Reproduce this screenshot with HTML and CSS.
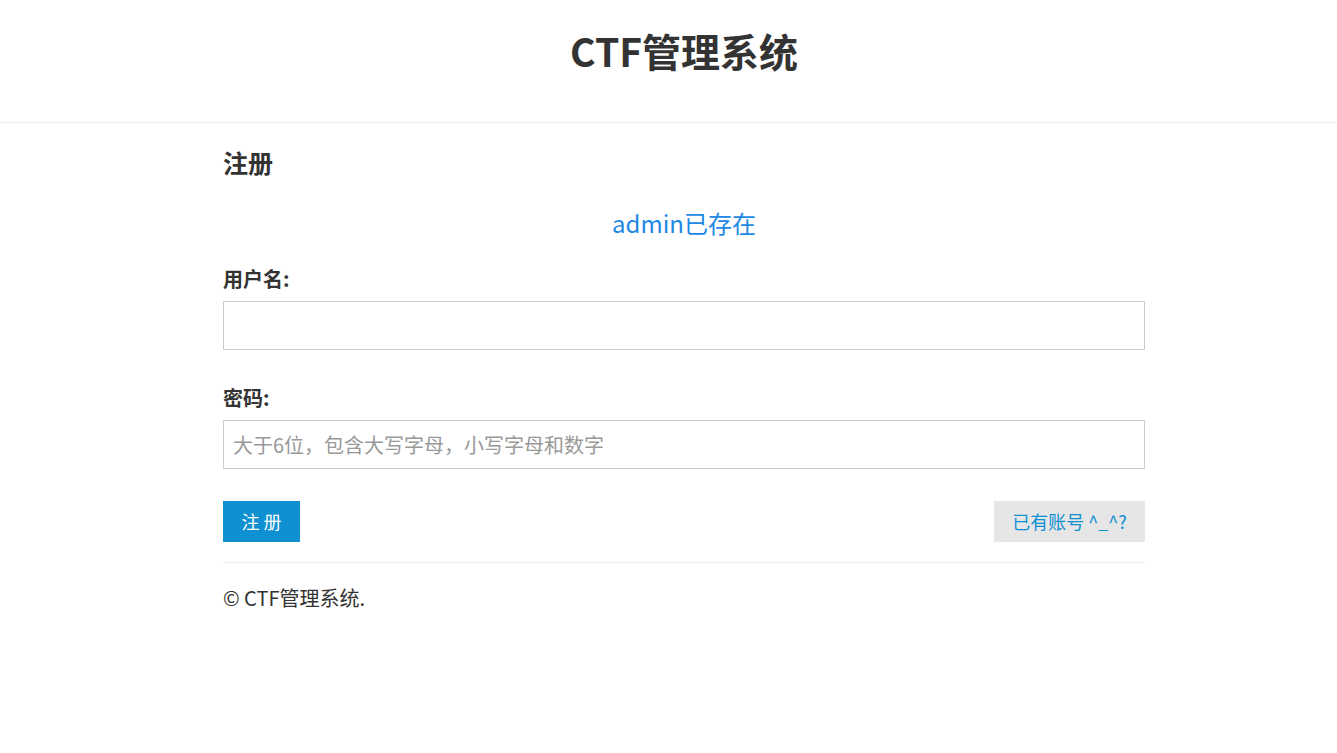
FILE: index.html
```html
<!DOCTYPE html>
<html lang="zh-CN">
<head>
  <meta charset="UTF-8" />
  <meta name="viewport" content="width=device-width, initial-scale=1.0" />
  <title>CTF管理系统 - 注册</title>
  <link rel="stylesheet" href="styles.css">
</head>
<body>
  <header class="header">
    <div class="header-inner">
      <h1>CTF管理系统</h1>
    </div>
  </header>

  <div class="wrap">
    <div class="container">
      <h3 class="title">注册</h3>
      <p class="notice">admin已存在</p>

      <form class="form" method="post">
        <label for="username">用户名:</label>
        <input id="username" name="username" type="text" />

        <label for="password" class="pw-label">密码:</label>
        <input id="password" name="password" type="password" placeholder="大于6位，包含大写字母，小写字母和数字" />

        <div class="actions">
          <button type="submit" class="btn btn-primary">注 册</button>
          <a href="#" class="btn btn-default">已有账号 ^_^?</a>
        </div>
      </form>

      <hr />
      <p class="footer">© CTF管理系统.</p>
    </div>
  </div>
</body>
</html>
```

FILE: styles.css
```css
body {
  margin: 0;
  padding: 0;
  background: #fff;
  color: #333;
  font-family: "Noto Sans CJK SC", "Noto Sans", sans-serif;
}
.header {
  border-bottom: 1px solid #eee;
  height: 122px;
}
.header-inner {
  padding-left: 31px;
  text-align: center;
}
.header h1 {
  margin: 0;
  padding-top: 22px;
  font-size: 39px;
  line-height: 56px;
  font-weight: bold;
  color: #333;
}
.wrap {
  padding-left: 31px;
}
.container {
  width: 922px;
  margin: 0 auto;
}
.title {
  margin: 0;
  padding-top: 23px;
  font-size: 25px;
  line-height: 32px;
  font-weight: bold;
}
.notice {
  margin: 29px 0 0;
  text-align: center;
  color: #1e88e5;
  font-size: 24px;
  line-height: 32px;
}
.form {
  margin-top: 26px;
}
label {
  display: block;
  font-size: 20px;
  font-weight: bold;
  line-height: 28px;
  margin-bottom: 8px;
}
.pw-label {
  margin-top: 34px;
}
input {
  display: block;
  width: 100%;
  box-sizing: border-box;
  height: 49px;
  padding: 0 9px;
  border: 1px solid #ccc;
  font-family: inherit;
  font-size: 20px;
  color: #555;
  outline: none;
}
input::placeholder {
  color: #999;
}
.actions {
  display: flex;
  justify-content: space-between;
  margin-top: 32px;
}
.btn {
  display: inline-block;
  box-sizing: border-box;
  height: 41px;
  line-height: 41px;
  border: none;
  font-family: inherit;
  font-size: 18px;
  text-decoration: none;
  cursor: pointer;
}
.btn-primary {
  background: #0e90d2;
  color: #fff;
  width: 77px;
  padding: 0;
}
.btn-default {
  background: #e6e6e6;
  color: #0e90d2;
  width: 151px;
  padding: 0;
  text-align: center;
}
hr {
  margin: 20px 0 0;
  border: 0;
  border-top: 1px solid #eee;
}
.footer {
  margin: 20px 0 0;
  font-size: 20px;
  line-height: 30px;
}
```
